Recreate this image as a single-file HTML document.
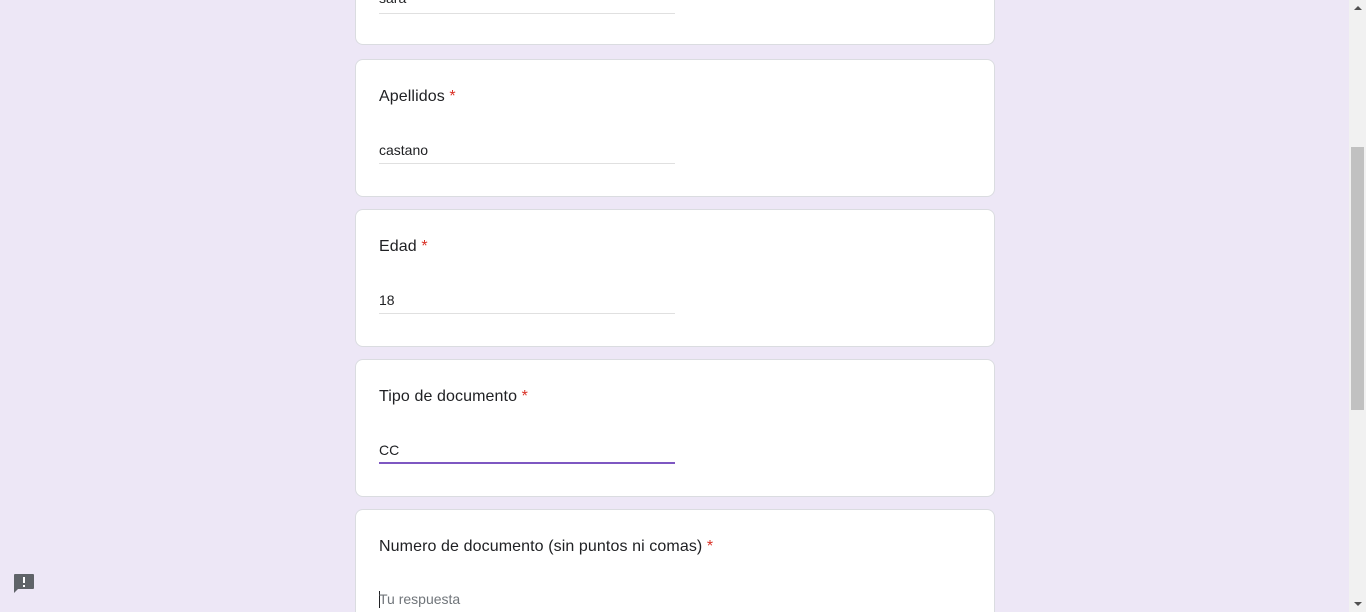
<!DOCTYPE html>
<html><head><meta charset="utf-8"><style>
html,body{margin:0;padding:0;width:1366px;height:612px;overflow:hidden;background:#ede7f6;font-family:"Liberation Sans",Roboto,Arial,sans-serif;}
#w{position:relative;width:1366px;height:612px;overflow:hidden}
.card{position:absolute;left:355px;width:638px;height:136px;background:#fff;border:1px solid #dadce0;border-radius:8px;}
.t{position:absolute;left:23px;top:28px;font-size:16px;color:#202124;letter-spacing:0.1px}
.t span{color:#d93025}
.a{position:absolute;left:23px;top:82px;font-size:14px;color:#202124}
.u{position:absolute;left:23px;top:103px;width:296px;height:1px;background:#e0e0e0}
.sb{position:absolute;left:1349px;top:0;width:17px;height:612px;background:#f1f1f1}
.th{position:absolute;left:1351px;top:147px;width:13px;height:263px;background:#c1c1c1}
</style></head><body><div id="w">
<div class="card" style="top:0;height:44px;border-top:none;border-radius:0 0 8px 8px"><div class="a" style="top:-10px">sara</div><div class="u" style="top:13px"></div></div>
<div class="card" style="top:59px"><div class="t">Apellidos <span>*</span></div><div class="a">castano</div><div class="u"></div></div>
<div class="card" style="top:209px"><div class="t">Edad <span>*</span></div><div class="a">18</div><div class="u"></div></div>
<div class="card" style="top:359px"><div class="t">Tipo de documento <span>*</span></div><div class="a">CC</div><div class="u" style="height:2px;top:102px;background:#7e57c2"></div></div>
<div class="card" style="top:509px;height:102px;border-bottom:none;border-radius:8px 8px 0 0;overflow:hidden"><div class="t">Numero de documento (sin puntos ni comas) <span>*</span></div><div class="a" style="color:#70757a;top:81px"><span style="display:inline-block;width:1px;height:17px;background:#202124;vertical-align:-4px;margin-right:-1px"></span>Tu respuesta</div></div>
<svg style="position:absolute;left:13px;top:573px" width="22" height="22" viewBox="0 0 22 22"><path d="M2 1h18a1 1 0 0 1 1 1v13a1 1 0 0 1-1 1H5l-4 4V2a1 1 0 0 1 1-1z" fill="#5f6368"/><rect x="10" y="4" width="2" height="6" fill="#fff"/><rect x="10" y="12" width="2" height="2" fill="#fff"/></svg>
<div class="sb"></div><div class="th"></div>
<div style="position:absolute;left:1354px;top:6px;width:0;height:0;border-left:4px solid transparent;border-right:4px solid transparent;border-bottom:4px solid #505050"></div>
<div style="position:absolute;left:1354px;top:602px;width:0;height:0;border-left:4px solid transparent;border-right:4px solid transparent;border-top:4px solid #505050"></div>
</div></body></html>
